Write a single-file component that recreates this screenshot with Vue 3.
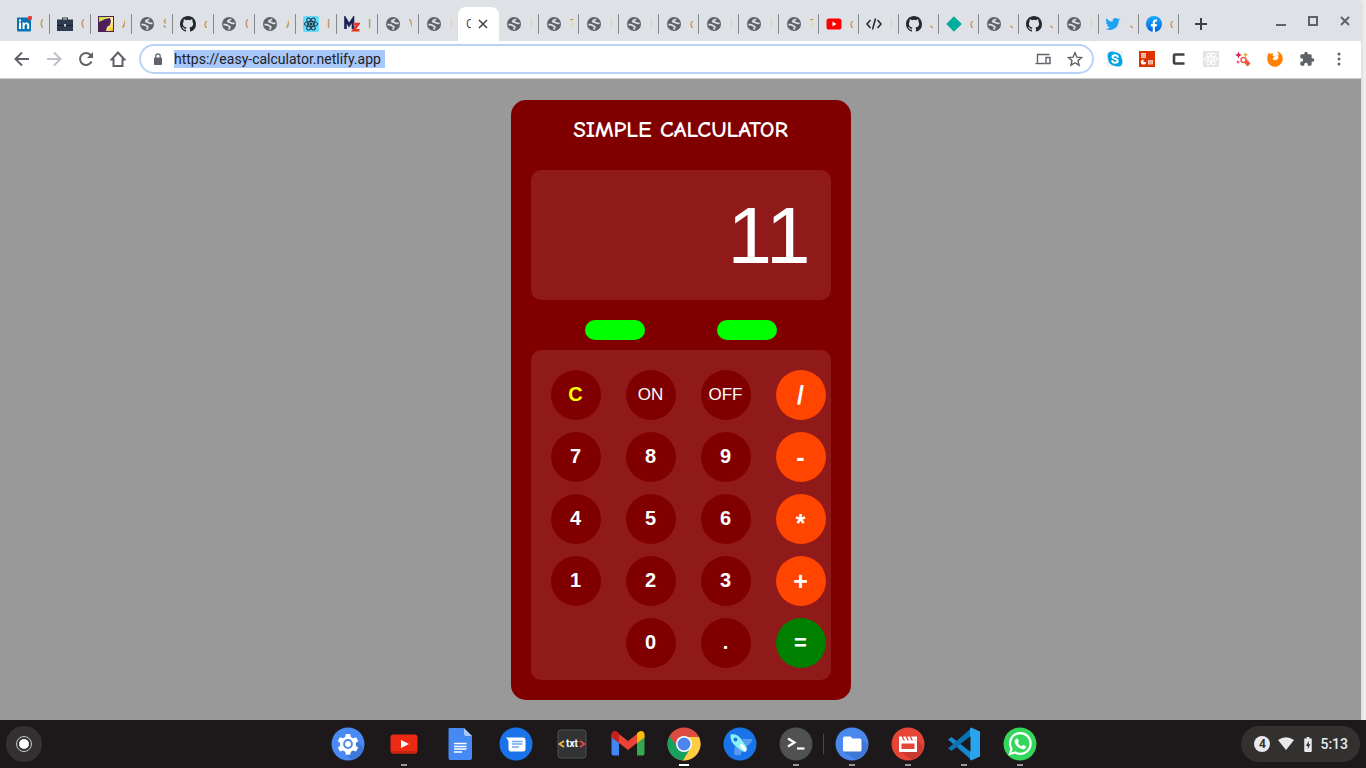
<script setup>
import { ref } from 'vue'

const leftTabs = [
  { icon: 'linkedin', title: 'C' },
  { icon: 'briefcase', title: 'C' },
  { icon: 'yellow', title: 'A' },
  { icon: 'globe', title: 'S' },
  { icon: 'github', title: 'c' },
  { icon: 'globe', title: 'C' },
  { icon: 'globe', title: 'A' },
  { icon: 'react', title: 'I' },
  { icon: 'mz', title: 'I' },
  { icon: 'globe', title: 'V' },
  { icon: 'globe', title: 'I', last: true, pale: true }
]
const rightTabs = [
  ['globe', 'I'], ['globe', 'T'], ['globe', 'I'], ['globe', 'I'], ['globe', 'c'], ['globe', 'I'],
  ['globe', 'I'], ['globe', 'T'], ['youtube', 'c'], ['code', 'I'], ['github', 'J'], ['diamond', 'c'],
  ['globe', 'J'], ['github', 'J'], ['globe', 'I'], ['twitter', 'J'], ['facebook', 'c']
].map(([icon, title]) => ({ icon, title, pale: title === 'I' }))

const extensions = ['skype', 'office', 'cext', 'reactgrey', 'wand', 'firefox', 'puzzle', 'more']

const apps = [
  { id: 'settings' }, { id: 'ytapp', run: true }, { id: 'docs' }, { id: 'messages' }, { id: 'txt' },
  { id: 'gmail' }, { id: 'chrome', run: true, active: true }, { id: 'rocket' },
  { id: 'terminal', run: true, divider: true }, { id: 'files', run: true }, { id: 'movie', run: true },
  { id: 'vscode', run: true }, { id: 'whatsapp', run: true }
]

const keys = [
  { t: 'C', k: 'clear' }, { t: 'ON', k: 'power' }, { t: 'OFF', k: 'power' }, { t: '/', k: 'op' },
  { t: '7' }, { t: '8' }, { t: '9' }, { t: '-', k: 'op' },
  { t: '4' }, { t: '5' }, { t: '6' }, { t: '*', k: 'op times' },
  { t: '1' }, { t: '2' }, { t: '3' }, { t: '+', k: 'op' },
  { t: '0', k: 'zero' }, { t: '.' }, { t: '=', k: 'op equals' }
]

const url = ref('https://easy-calculator.netlify.app')
const display = ref('11')
const isOn = ref(true)

function compute(text) {
  const parts = text.match(/\d*\.?\d+|[-+*/]/g) || []
  const apply = { '+': (a, b) => a + b, '-': (a, b) => a - b, '*': (a, b) => a * b, '/': (a, b) => a / b }
  let total = Number(parts[0] || 0)
  for (let i = 1; i + 1 < parts.length; i += 2) {
    if (apply[parts[i]]) total = apply[parts[i]](total, Number(parts[i + 1]))
  }
  return String(total)
}
function press(key) {
  if (key === 'ON') isOn.value = true
  else if (key === 'OFF') { isOn.value = false; display.value = '' }
  else if (!isOn.value) return
  else if (key === 'C') display.value = ''
  else if (key === '=') display.value = compute(display.value)
  else display.value += key
}
</script>

<template>
  <div class="desktop">
    <svg class="sprite" aria-hidden="true">
      <defs>
        <linearGradient id="fbg" x1="0" y1="0" x2="0" y2="1"><stop offset="0" stop-color="#18acfe" /><stop offset="1" stop-color="#0163e0" /></linearGradient>
        <linearGradient id="yel" x1="0" y1="0" x2="1" y2="1"><stop offset="0" stop-color="#ffe94a" /><stop offset=".6" stop-color="#fff7b0" /><stop offset="1" stop-color="#f9b800" /></linearGradient>
        <symbol id="globe" viewBox="0 0 16 16"><circle cx="8" cy="8" r="7" fill="#5f6368" /><path d="M2.500 8.700c3-.6 3.800.2 4.500 1s2.300.4 1.800 1.700-.8 1-1 2.300M9.800 2.800c0 1.700-2.800.9-3 2.400-.1 1.200 2.100.6 3 1.500.9 1.100 2 .9 3.700.5" fill="none" stroke="#dee1e6" stroke-width="1.700" /></symbol>
        <symbol id="github" viewBox="0 0 16 16"><path fill="#24292e" d="M8 0C3.580 0 0 3.580 0 8c0 3.540 2.290 6.530 5.470 7.590.4.070.55-.17.55-.38 0-.19-.01-.82-.01-1.490-2.010.37-2.530-.49-2.690-.94-.09-.23-.48-.94-.82-1.130-.28-.15-.68-.52-.01-.53.63-.01 1.080.58 1.230.82.72 1.210 1.870.87 2.330.66.07-.52.28-.87.51-1.070-1.780-.2-3.640-.89-3.640-3.950 0-.87.31-1.590.82-2.150-.08-.2-.36-1.020.08-2.120 0 0 .67-.21 2.200.82a7.600 7.600 0 0 1 4 0c1.530-1.040 2.200-.82 2.200-.82.44 1.100.16 1.920.08 2.120.51.56.82 1.270.82 2.150 0 3.070-1.870 3.750-3.650 3.950.29.25.54.73.54 1.480 0 1.070-.01 1.930-.01 2.200 0 .21.15.46.55.38A8.010 8.010 0 0 0 16 8c0-4.420-3.580-8-8-8z" /></symbol>
        <symbol id="linkedin" viewBox="0 0 16 16"><rect x="1" y="1.500" width="14" height="14" rx="1" fill="#0a74b3" /><path d="M3 6.500h2v6.500H3zM3 3.500h2v2H3zM6.500 6.500h2v1c1-1.700 4.700-1.600 4.700 1.600V13h-2V9.700c0-2-2.600-1.900-2.600 0V13H6.500z" fill="#fff" /><circle cx="14" cy="2" r="2.200" fill="#e83f3f" /></symbol>
        <symbol id="briefcase" viewBox="0 0 16 16"><path d="M5 4V1.500h6V4M0 3.500h16V15H0z" fill="#2d3b4e" /><path d="M6 3.500V2.500h4v1z" fill="#dee1e6" /><path d="M0 9h16v1H0z" fill="#17202c" /><path d="M7 8h2v2.500H7z" fill="#c5ced8" /></symbol>
        <symbol id="yellow" viewBox="0 0 16 16"><rect width="16" height="16" fill="#4d2057" /><path d="M1 1h14v14H7z" fill="url(#yel)" /><path d="M1 8l2-3 4-2 5-1 1 3-1 4-3 2-1 4H1z" fill="#4d2057" /><path d="M1 1h8L1 6z" fill="#c5e545" /></symbol>
        <symbol id="react" viewBox="0 0 16 16"><rect width="16" height="16" rx="2" fill="#61dafb" /><g fill="none" stroke="#243746" stroke-width="1"><ellipse cx="8" cy="8" rx="6.700" ry="2.600" /><ellipse cx="8" cy="8" rx="6.700" ry="2.600" transform="rotate(60 8 8)" /><ellipse cx="8" cy="8" rx="6.700" ry="2.600" transform="rotate(120 8 8)" /></g><circle cx="8" cy="8" r="1.500" fill="#243746" /></symbol>
        <symbol id="reactgrey" viewBox="0 0 16 16"><rect width="16" height="16" fill="#e4e4e4" /><g fill="none" stroke="#fff" stroke-width="1"><ellipse cx="8" cy="8" rx="6.500" ry="2.600" /><ellipse cx="8" cy="8" rx="6.500" ry="2.600" transform="rotate(60 8 8)" /><ellipse cx="8" cy="8" rx="6.500" ry="2.600" transform="rotate(120 8 8)" /></g><circle cx="8" cy="8" r="1.300" fill="#fff" /></symbol>
        <symbol id="mz" viewBox="0 0 16 16"><path d="M1.500 13V3l3.500 6 4-6v10" fill="none" stroke="#1b2350" stroke-width="2.600" /><path d="M9 8h5.500l-5 6.200h6" fill="none" stroke="#e53526" stroke-width="2.400" /></symbol>
        <symbol id="youtube" viewBox="0 0 16 16"><rect x=".5" y="2.500" width="15" height="11" rx="2.600" fill="#f00" /><path d="M6.500 5.500v5L10.500 8z" fill="#fff" /></symbol>
        <symbol id="code" viewBox="0 0 16 16"><path d="M4.500 4L1 8l3.500 4M11.500 4L15 8l-3.500 4M9.500 2.500l-3 11" fill="none" stroke="#23272b" stroke-width="1.500" /></symbol>
        <symbol id="diamond" viewBox="0 0 16 16"><path d="M8 .2L15.800 8 8 15.800.2 8z" fill="#00ad9f" /></symbol>
        <symbol id="twitter" viewBox="1 -1 26 26"><path fill="#1da1f2" d="M24 4.560a9.800 9.800 0 0 1-2.830.78 4.930 4.930 0 0 0 2.170-2.730 9.900 9.900 0 0 1-3.130 1.200 4.920 4.920 0 0 0-8.390 4.480A13.980 13.980 0 0 1 1.670 3.150a4.930 4.930 0 0 0 1.530 6.570 4.900 4.900 0 0 1-2.230-.61c-.05 2.280 1.580 4.410 3.950 4.890a4.900 4.900 0 0 1-2.220.08 4.930 4.930 0 0 0 4.600 3.420A9.900 9.900 0 0 1 0 19.540a13.940 13.940 0 0 0 7.550 2.210c9.140 0 14.310-7.720 13.990-14.640A10 10 0 0 0 24 4.560z" /></symbol>
        <symbol id="facebook" viewBox="0 0 16 16"><circle cx="8" cy="8" r="8" fill="url(#fbg)" /><path d="M6.800 16v-5.500H4.900V8h1.900V6.700C6.800 4.500 8 3.500 9.600 3.500c.7 0 1.400.1 1.400.1v1.800h-.9c-1 0-1.200.6-1.200 1.200V8H11l-.4 2.500H8.900V16z" fill="#fff" /></symbol>
        <symbol id="skype" viewBox="0 0 16 16"><rect width="16" height="16" fill="#f3f3f3" /><circle cx="5" cy="5" r="4.500" fill="#00a4e4" /><circle cx="11" cy="11" r="4.500" fill="#00a4e4" /><circle cx="8" cy="8" r="6.800" fill="#00a4e4" /><path d="M10.800 5.800C10 3.600 5.500 3.800 5.500 6c0 2.300 5.200 1.500 5.200 3.900 0 2.300-4.700 2.400-5.500.2" fill="none" stroke="#fff" stroke-width="2" stroke-linecap="round" /></symbol>
        <symbol id="office" viewBox="0 0 16 16"><rect width="16" height="16" fill="#dc3300" /><path d="M2 2h5v5H2zM9 9h5v4.500H9z" fill="#f7c9bc" /><circle cx="4.500" cy="11" r="2.600" fill="#fff" /><path d="M4.500 11V8.400H7.100V11z" fill="#dc3300" /><path d="M2 3.700h5M2 5.300h5M10.700 9v4.500M12.300 9v4.500" stroke="#e7775a" stroke-width=".5" /></symbol>
        <symbol id="cext" viewBox="0 0 16 16"><path d="M13.500 3.500H4q-1 0-1 1v7q0 1 1 1h9.500" fill="none" stroke="#3f4246" stroke-width="2.600" /></symbol>
        <symbol id="wand" viewBox="0 0 16 16"><path d="M3.500.5l1 2.500 2.500 1-2.500 1-1 2.500-1-2.500L0 4l2.500-1zM3 9l.5 1.500L5 11l-1.500.5L3 13l-.5-1.500L1 11l1.500-.5z" fill="#e0154b" /><path d="M10.500 1l.8 2 2 .8-2 .8-.8 2-.8-2-2-.8 2-.8z" fill="#fba51a" /><circle cx="8.500" cy="9" r="2.500" fill="#fff" stroke="#f15a38" stroke-width="1.500" /><path d="M9 11.500l3-3 3.500 4-3 3z" fill="#f15a38" /></symbol>
        <symbol id="firefox" viewBox="0 0 16 16"><path d="M.5 5Q1 2.800 2.200 1.200l.6 2Q4.500 2 6.500 2.500 5.300 3.600 5.500 4.500l2.300.7-2 2.200c.5 2.200 4 2.400 5.200.2.900-1.700-.2-3-1-3.600q1.500 0 2 .6Q11.500 1.700 9.500.5c4 .2 6.500 4 6.300 7.500-.4 4.500-3.900 7.800-7.800 7.800C3 15.800-.8 11.500.5 5z" fill="#ff8207" /></symbol>
        <symbol id="puzzle" viewBox="0 0 24 24"><path fill="#5f6368" d="M20.500 11H19V7c0-1.100-.9-2-2-2h-4V3.500a2.500 2.500 0 0 0-5 0V5H4c-1.100 0-2 .9-2 2v3.800h1.500a2.700 2.700 0 0 1 0 5.400H2V20c0 1.100.9 2 2 2h3.800v-1.500a2.700 2.700 0 0 1 5.400 0V22H17c1.100 0 2-.9 2-2v-4h1.500a2.500 2.500 0 0 0 0-5z" /></symbol>
        <symbol id="more" viewBox="0 0 16 16"><g fill="#5f6368"><circle cx="8" cy="3" r="1.500" /><circle cx="8" cy="8" r="1.500" /><circle cx="8" cy="13" r="1.500" /></g></symbol>

        <symbol id="settings" viewBox="0 0 34 34"><circle cx="17" cy="17" r="16.500" fill="#4a8af4" /><path d="M13 26l9-16 11 11a16 16 0 0 1-12 12z" fill="#3d78dc" /><path d="M14.800 7h4.400l.6 3 2.300 1.300 2.900-1 2.200 3.800-2.300 2v2.600l2.300 2-2.200 3.800-2.900-1-2.300 1.300-.6 3h-4.400l-.6-3-2.300-1.300-2.900 1-2.200-3.800 2.300-2v-2.600l-2.300-2L9 10.300l2.900 1 2.300-1.300z" fill="#fff" /><circle cx="17" cy="17" r="3.900" fill="#fff" stroke="#4a8af4" stroke-width="2" /></symbol>
        <symbol id="ytapp" viewBox="0 0 34 34"><rect x="3.500" y="7.500" width="27" height="19" rx="3" fill="#ee2a12" /><path d="M4 24v1q0 1.500 2 1.500h22q2 0 2-1.500v-1z" fill="#ca2410" /><path d="M14 13v8l8-4z" fill="#fff" /></symbol>
        <symbol id="docs" viewBox="0 0 34 34"><path d="M6.500 1h14l8.500 8v22q0 2-2 2H7q-1.500 0-1.500-2V2q0-1 1-1z" fill="#4688f4" /><path d="M21 1v6q0 2 2 2h6z" fill="#a9c8fa" /><path d="M11 16.500h12.500M11 19.500h12.500M11 22h12.500M11 25h8" stroke="#fff" stroke-width="1.500" /></symbol>
        <symbol id="messages" viewBox="0 0 34 34"><circle cx="17" cy="17" r="16.500" fill="#1a73e8" /><path d="M7 10.500h17q2.500 0 2.500 2.500v9q0 2.500-2.500 2.500H12q-2.500 0-2.500-2.500v-8z" fill="#fff" /><path d="M13 14.500h10.500M13 17h10.500M13 20h7" stroke="#71a9f3" stroke-width="1.500" /></symbol>
        <symbol id="txt" viewBox="0 0 34 34"><rect x="3" y="3" width="28" height="28" rx="3" fill="#323334" stroke="#515253" /><path d="M9 14l-4.500 3L9 20" fill="none" stroke="#f2bd3d" stroke-width="1.800" /><path d="M25 14l4.500 3-4.500 3" fill="none" stroke="#e44848" stroke-width="1.800" /><text x="17" y="20" text-anchor="middle" font-family="Roboto, sans-serif" font-size="10" font-weight="700" fill="#fff">txt</text></symbol>
        <symbol id="gmail" viewBox="0 0 34 34"><path d="M.5 8v18.500q0 2 2 2H8V14z" fill="#4285f4" /><path d="M26 14v14.500h5.500q2 0 2-2V8z" fill="#34a853" /><path d="M8 7l9 7 9-7v9l-9 7-9-7z" fill="#ea4335" /><path d="M.5 7.500C.5 4 4 3 6.500 5L8 6.200V16L.5 10.500z" fill="#c5221f" /><path d="M33.500 7.500c0-3.500-3.500-4.500-6-2.500L26 6.200V16l7.500-5.500z" fill="#fbbc04" /></symbol>
        <symbol id="chrome" viewBox="0 0 34 34"><circle cx="17" cy="17" r="16.500" fill="#dc4d41" /><path d="M2.500 9A16.500 16.500 0 0 0 16 33.500L23.500 21 10 19.500z" fill="#18a05e" /><path d="M16 33.500A16.500 16.500 0 0 0 32 10H17l6.500 11z" fill="#ffcd42" /><circle cx="17" cy="17" r="8" fill="#fff" /><circle cx="17" cy="17" r="6.500" fill="#4a86ee" /></symbol>
        <symbol id="rocket" viewBox="0 0 34 34"><circle cx="17" cy="17" r="16.500" fill="#1a73e8" /><path d="M19 12h10q0 4-4 6l-2 2zM12 18l7 5-1 5q-6 1-7-1z" fill="#579bf0" /><path d="M7.500 7.500q7-1 11 5l4.500 6.500q2 3 0 5-2.500 1.500-5-.5l-6-5q-5-4-4.500-11z" fill="#8af2f2" /><circle cx="12.500" cy="12.500" r="2" fill="#1a73e8" /><path d="M18.500 18.500l3.500 4.500" stroke="#fff" stroke-width="3" stroke-linecap="round" /></symbol>
        <symbol id="terminal" viewBox="0 0 34 34"><circle cx="17" cy="17" r="16.500" fill="#505152" /><path d="M9 11.500l6.500 4-6.500 4" fill="none" stroke="#fff" stroke-width="2.200" /><path d="M18 21.500h7.500" stroke="#fff" stroke-width="2.200" /></symbol>
        <symbol id="files" viewBox="0 0 34 34"><circle cx="17" cy="17" r="16.500" fill="#4a88ee" /><path d="M9 25L27 12l6 6q-1 11-12 14.500z" fill="#3f78d4" /><path d="M10 9.500h5.500l2 2H25q1.500 0 1.500 1.500v10q0 1.500-1.500 1.500H9.500Q8 24.500 8 23V11.500q0-2 2-2z" fill="#fff" /></symbol>
        <symbol id="movie" viewBox="0 0 34 34"><circle cx="17" cy="17" r="16.500" fill="#e54437" /><path d="M10 25l16-12 6 6q-1 10-11 13.500z" fill="#c93b30" /><path d="M8 9.500h2.500l2 4H14l-2-4h2.500l2 4H18l-2-4h2.500l2 4H22l-2-4h2.500l2 4H26v11q0 .5-1 .5H9q-1 0-1-1z" fill="#fff" /><path d="M22.500 9.500H26v4h-1.500z" fill="#fff" /><path d="M10.500 16.500h13v5.500h-13z" fill="#e54437" /></symbol>
        <symbol id="vscode" viewBox="0 0 34 34"><path d="M1 12.500L4.500 10 25 26v7.500z" fill="#1688d0" /><path d="M1 21.500L4.500 24 25 8V.5z" fill="#0b71b5" /><path d="M24 .5l9 4v25l-9 4-1-1V1.500z" fill="#29a5ee" /><path d="M23.500 9.500v15L14.500 17z" fill="#1d181a" /></symbol>
        <symbol id="whatsapp" viewBox="0 0 34 34"><circle cx="17" cy="17" r="16.500" fill="#34d65b" /><path d="M7 27l1.500-5.200A10.300 10.300 0 1 1 12.300 25.500z" fill="none" stroke="#fff" stroke-width="2.200" /><path d="M13.700 11.500c.6-.2 1-.1 1.300.6l.8 1.800c.2.500-.1.900-.9 1.800.9 1.700 2.100 2.800 3.900 3.600.9-1.100 1.200-1.400 1.700-1.200l2 .9c.5.300.6.500.4 1.400-.3 1.300-2 2.200-3.300 1.900-4-.8-7.400-4-8-7.300-.2-1.400.9-3.200 2.100-3.500z" fill="#fff" /></symbol>
      </defs>
    </svg>

    <div class="browser">
      <header class="strip">
        <nav class="tabs" aria-label="Tabs">
          <button v-for="(t, i) in leftTabs" :key="'l' + i" class="tab" :class="{ last: t.last, pale: t.pale }">
            <svg class="fav"><use :href="'#' + t.icon" /></svg><span class="peek">{{ t.title }}</span>
          </button>
          <button class="tab current">
            <span class="peek wide">C</span>
            <svg class="close" viewBox="0 0 10 10"><path d="M1 1l8 8M9 1L1 9" stroke="#3c4043" stroke-width="1.500" /></svg>
          </button>
          <button v-for="(t, i) in rightTabs" :key="'r' + i" class="tab narrow" :class="{ pale: t.pale }">
            <svg class="fav"><use :href="'#' + t.icon" /></svg><span class="peek">{{ t.title }}</span>
          </button>
          <button class="new" aria-label="New tab"><svg viewBox="0 0 12 12"><path d="M6 0v12M0 6h12" stroke="#3c4043" stroke-width="2" /></svg></button>
        </nav>
        <div class="controls">
          <button aria-label="Minimize"><svg viewBox="0 0 12 12"><path d="M1 10h10" stroke="#5f6368" stroke-width="2" /></svg></button>
          <button aria-label="Maximize"><svg viewBox="0 0 12 12"><path d="M2 2h8v8H2z" fill="none" stroke="#5f6368" stroke-width="2" /></svg></button>
          <button aria-label="Close"><svg viewBox="0 0 12 12"><path d="M2 2l8 8M10 2l-8 8" stroke="#5f6368" stroke-width="2" /></svg></button>
        </div>
      </header>

      <div class="toolbar">
        <div class="nav">
          <button aria-label="Back"><svg viewBox="0 0 16 16"><path d="M15 8H2M8 1.500L1.500 8 8 14.500" fill="none" stroke="#5f6368" stroke-width="2" /></svg></button>
          <button aria-label="Forward"><svg viewBox="0 0 16 16"><path d="M1 8h13M8 1.500L14.500 8 8 14.500" fill="none" stroke="#bdc1c6" stroke-width="2" /></svg></button>
          <button aria-label="Reload"><svg viewBox="0 0 16 16"><path d="M13.500 10.500A6 6 0 1 1 12.500 4L14 5.500" fill="none" stroke="#5f6368" stroke-width="2" /><path d="M15 1v6H9z" fill="#5f6368" /></svg></button>
          <button aria-label="Home"><svg viewBox="0 0 16 16"><path d="M8 1.500L1.500 8.500H3.500V15h9V8.500h2z" fill="none" stroke="#5f6368" stroke-width="2" /></svg></button>
        </div>
        <div class="omnibox">
          <svg class="lock" viewBox="0 0 10 12"><rect x="1" y="4.500" width="8" height="7.500" rx="1" fill="#5f6368" /><path d="M2.800 5V3a2.200 2.200 0 0 1 4.400 0v2" fill="none" stroke="#5f6368" stroke-width="1.300" /></svg>
          <input v-model="url" class="url" aria-label="Address" spellcheck="false" />
          <div class="actions">
            <button aria-label="Send to your devices"><svg viewBox="0 0 16 16"><path d="M14.500 3.500H2.500v8M.5 12.500H10M11 6.500h4v6h-4z" fill="none" stroke="#5f6368" stroke-width="1.400" /></svg></button>
            <button aria-label="Bookmark"><svg viewBox="0 0 16 16"><path d="M8 1.800l1.900 4.300 4.700.4-3.600 3.100 1.100 4.600L8 11.700l-4.100 2.500L5 9.600 1.400 6.500l4.700-.4z" fill="none" stroke="#5f6368" stroke-width="1.400" /></svg></button>
          </div>
        </div>
        <div class="exts">
          <button v-for="e in extensions" :key="e" :aria-label="e"><svg><use :href="'#' + e" /></svg></button>
        </div>
      </div>

      <main class="page">
        <section class="calculator">
          <h1>SIMPLE CALCULATOR</h1>
          <input class="display" :value="display" readonly aria-label="Result" />
          <div class="leds"><i :class="{ off: !isOn }" /><i :class="{ off: !isOn }" /></div>
          <div class="keypad">
            <button v-for="k in keys" :key="k.t" :class="k.k" @click="press(k.t)">{{ k.t }}</button>
          </div>
        </section>
      </main>
    </div>

    <footer class="shelf">
      <button class="launcher" aria-label="Launcher"><svg viewBox="0 0 16 16"><circle cx="8" cy="8" r="7.500" fill="none" stroke="#ccc" stroke-width="1" /><circle cx="8" cy="8" r="5" fill="#fff" /></svg></button>
      <nav class="apps" aria-label="Apps">
        <button v-for="a in apps" :key="a.id" :aria-label="a.id" :class="{ run: a.run, active: a.active, divider: a.divider }">
          <svg><use :href="'#' + a.id" /></svg>
        </button>
      </nav>
      <button class="status">
        <span class="count">4</span>
        <svg class="wifi" viewBox="0 0 16 16"><path d="M0 4q8-5.500 16 0L8 14z" fill="#e8eaed" /></svg>
        <svg class="battery" viewBox="0 0 8 16"><path d="M2.500 0h3v1.500H8V15q0 1-1 1H1q-1 0-1-1V1.500h2.500z" fill="#e8eaed" /><path d="M4.800 4L1.800 9.500h2V13l2.700-5.300H4.800z" fill="#32312f" /></svg>
        <span>5:13</span>
      </button>
    </footer>
  </div>
</template>

<style>
body { margin: 0; }
</style>

<style scoped>
* { box-sizing: border-box; }
button { margin: 0; padding: 0; border: 0; background: none; font: inherit; color: inherit; cursor: pointer; }
svg { display: block; flex: none; }
.sprite { position: absolute; width: 0; height: 0; }
.desktop { display: flex; flex-direction: column; min-height: 100vh; background: #eee; font-family: Roboto, "Liberation Sans", sans-serif; }
.browser { flex: 1; display: flex; flex-direction: column; margin-right: 5px; border-radius: 4px 4px 0 0; overflow: hidden; box-shadow: 0 0 4px #ccc; }

.strip { display: flex; justify-content: space-between; height: 41px; background: #dee1e6; }
.tabs { display: flex; padding: 7px 0 0 9px; min-width: 0; }
.tab { position: relative; display: flex; align-items: center; flex: none; width: 41px; height: 34px; padding-left: 7px; font-size: 12px; color: #b98a4c; }
.tab::after { content: ""; position: absolute; right: 0; top: 7px; width: 1px; height: 20px; background: #85888c; }
.tab.last { width: 39px; }
.tab.last::after, .tab.current::after { display: none; }
.tab.narrow { width: 40px; }
.tab.pale { color: #e6d49a; }
.fav { width: 16px; height: 16px; }
.peek { width: 3px; margin-left: 8px; overflow: hidden; text-align: left; white-space: nowrap; }
.tab.current { background: #fff; border-radius: 8px 8px 0 0; padding-left: 8px; color: #45576b; }
.peek.wide { width: 5px; margin: 0; }
.close { width: 10px; height: 10px; margin-left: 7px; }
.new { width: 24px; height: 34px; margin-left: 10px; display: grid; place-items: center; }
.new svg { width: 12px; height: 12px; }
.controls { display: flex; gap: 20px; padding: 0 10px 0 0; }
.controls svg { width: 12px; height: 12px; }

.toolbar { display: flex; align-items: center; height: 38px; padding: 0 14px 1px; background: #fff; border-bottom: 1px solid #ccc; }
.nav { display: flex; gap: 16px; margin-right: 13px; }
.nav svg, .actions svg, .exts svg { width: 16px; height: 16px; }
.omnibox { flex: 1; display: flex; align-items: center; height: 30px; padding: 0 9px 0 12px; border: 2px solid #b9d3f8; border-radius: 15px; }
.lock { width: 10px; height: 12px; }
.url { field-sizing: content; min-width: 211px; margin: 0 auto 0 11px; padding: 0; border: 0; outline: 0; height: 18px; background: #a8c7fa; color: #202124; font: 14px Roboto, sans-serif; }
.actions { display: flex; gap: 16px; }
.exts { display: flex; gap: 16px; margin-left: 13px; }

.page { flex: 1; padding: 21px 0 20px; background: #999; }
.calculator { width: 340px; margin: 0 auto; padding: 0 20px 20px; border-radius: 15px; background: maroon; font-family: "Liberation Sans", Arial, sans-serif; color: #fff; }
h1 { margin: 0; padding-bottom: 10px; text-align: center; white-space: nowrap; font: 900 23px/60px "Comic Sans MS", "Comic Neue", cursive; }
.display { display: block; width: 100%; height: 130px; padding: 2px 20px 0; border: 0; border-radius: 10px; outline: 0; background: #901919; color: #fff; text-align: right; font: 80px "Liberation Sans", Arial, sans-serif; }
.leds { display: flex; justify-content: space-between; padding: 20px 54px 10px; }
.leds i { width: 60px; height: 20px; border-radius: 10px; background: lime; }
.leds .off { background: #400; }
.keypad { display: grid; grid-template-columns: repeat(4, 50px); gap: 12px 25px; padding: 20px 5px 12px 20px; border-radius: 10px; background: #901919; }
.keypad button { width: 50px; height: 50px; padding-bottom: 2px; border-radius: 50%; background: maroon; color: #fff; font-size: 20px; font-weight: 700; }
.keypad .clear { color: yellow; }
.keypad .power { padding: 0; font-size: 17px; font-weight: 400; }
.keypad .zero { grid-column: 2; }
.keypad .op { padding: 0; background: #ff4500; font-size: 25px; }
.keypad .times { padding-top: 8px; }
.keypad .equals { background: green; font-size: 22px; }

.shelf { display: grid; grid-template-columns: 1fr auto 1fr; align-items: center; height: 48px; padding: 0 6px; background: #1d181a; color: #e8eaed; }
.launcher { display: grid; place-items: center; width: 36px; height: 36px; border-radius: 50%; background: #343132; }
.launcher svg { width: 16px; height: 16px; }
.apps { display: flex; padding-left: 2px; }
.apps button { position: relative; display: grid; place-items: center; width: 56px; height: 48px; }
.apps svg { width: 34px; height: 34px; }
.apps .run::before { content: ""; position: absolute; left: 25px; bottom: 2px; width: 6px; height: 2px; background: #989898; }
.apps .active::before { left: 23px; width: 10px; background: #fff; }
.apps .divider::after { content: ""; position: absolute; right: 0; top: 14px; width: 1px; height: 20px; background: #4b4749; }
.status { justify-self: end; display: flex; align-items: center; height: 36px; padding: 0 12px 0 13px; border-radius: 18px; background: #32312f; font-size: 14px; font-weight: 500; }
.count { width: 16px; height: 16px; border-radius: 50%; background: #e8eaed; color: #32312f; font-size: 12px; line-height: 16px; font-weight: 700; text-align: center; }
.wifi { width: 16px; height: 16px; margin: 0 10px 0 8px; }
.battery { width: 8px; height: 15px; margin-right: 8px; }
</style>
